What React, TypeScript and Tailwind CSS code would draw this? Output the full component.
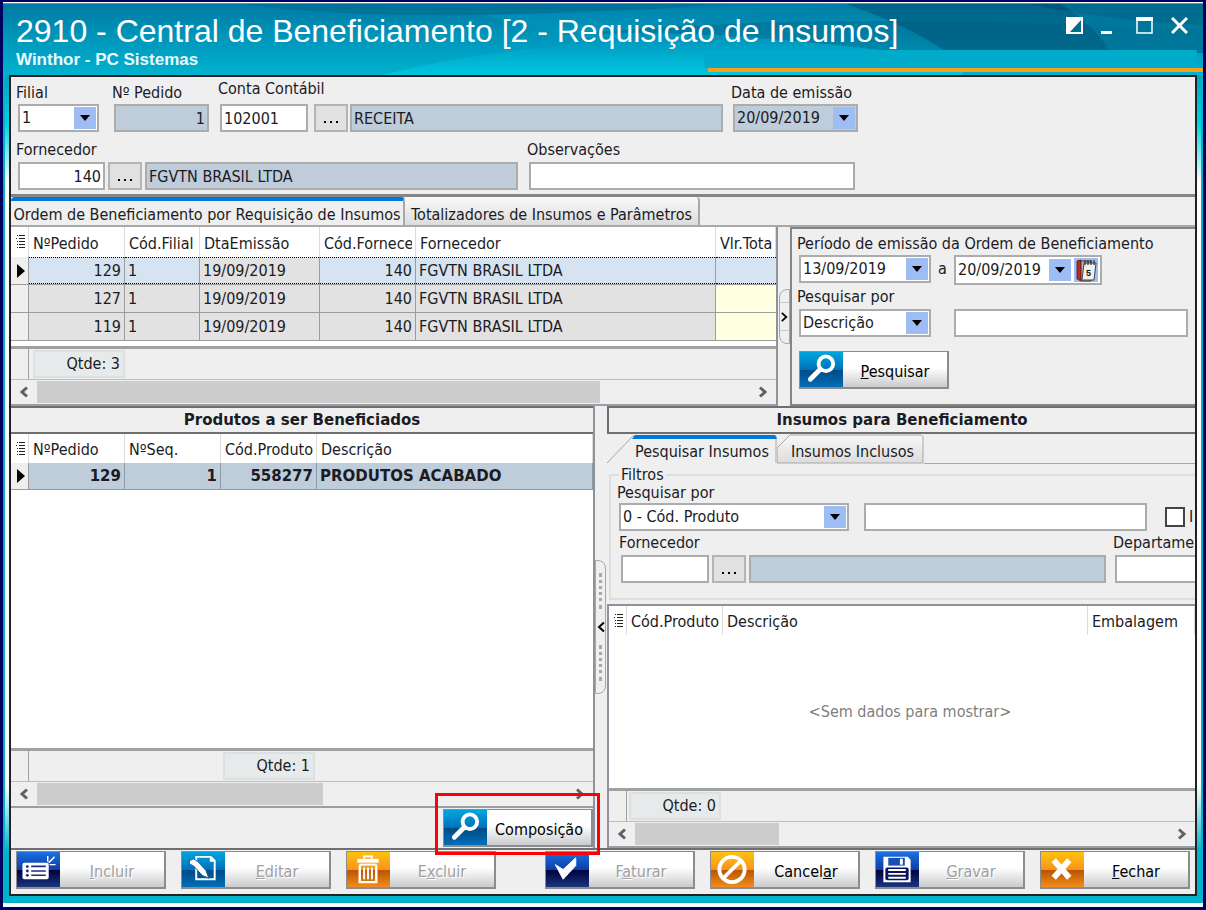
import type { ReactNode } from "react";
import { clsx } from "clsx";

type Tone = "navy" | "sky" | "orange";

const TONES: Record<Tone, string> = {
  navy: "bg-[linear-gradient(#1b6fe0,#0d3fa8_50%,#00003c_51%,#1a3580)]",
  sky: "bg-[linear-gradient(#00a5de,#0072bc_50%,#004a85_51%,#006fb8)]",
  orange: "bg-[linear-gradient(#ffc20e,#f7941d_50%,#b85400_51%,#f28c1c)]",
};

const ORDERS = [
  { id: "129", branch: "1", date: "19/09/2019", code: "140", supplier: "FGVTN BRASIL LTDA" },
  { id: "127", branch: "1", date: "19/09/2019", code: "140", supplier: "FGVTN BRASIL LTDA" },
  { id: "119", branch: "1", date: "19/09/2019", code: "140", supplier: "FGVTN BRASIL LTDA" },
];

const FIELD = "h-7 border-2 border-[#acacac] px-[2px] leading-6 outline-none";
const LABEL = "-ml-[2px] block whitespace-nowrap";
const BOLD = "font-['DejaVu_Sans','Noto_Sans',sans-serif] text-[15px] font-bold";

/* ---------- icons ---------- */

function SearchIcon() {
  return (
    <svg viewBox="0 0 43 36" className="size-full" fill="none" stroke="#fff">
      <circle cx="26" cy="12" r="7.500" strokeWidth="4" />
      <path d="M20 18L10 28" strokeWidth="5" strokeLinecap="round" />
    </svg>
  );
}

function ListIcon() {
  return (
    <svg viewBox="0 0 43 36" className="size-full">
      <rect x="5" y="11" width="27" height="17" rx="2" fill="#fff" />
      <g fill="#1c2f80">
        <circle cx="10" cy="15" r="1.500" />
        <circle cx="10" cy="19.500" r="1.500" />
        <circle cx="10" cy="24" r="1.500" />
        <path d="M14 14h15v1.600H14zM14 18.700h15v1.600H14zM14 23.200h15v1.600H14z" />
      </g>
      <path d="M31 4v6M38 5l-6 6M33 13h6" stroke="#fff" strokeWidth="1.500" />
    </svg>
  );
}

function EditIcon() {
  return (
    <svg viewBox="0 0 43 36" className="size-full" fill="none">
      <path d="M14 5h15l4 4v19H14z" stroke="#fff" strokeWidth="2" />
      <path d="M28 4v6h6z" fill="#fff" />
      <path d="M7 9l4-2 5 3 8 9 3 8-7-3-8-9-5-3z" fill="#fff" stroke="#0b5c9c" strokeWidth="1" />
    </svg>
  );
}

function TrashIcon() {
  return (
    <svg viewBox="0 0 43 36" className="size-full" fill="none" stroke="#fff">
      <path d="M17 7V4.500h8V7" strokeWidth="2" />
      <path d="M10 9h22" strokeWidth="4" />
      <path d="M12 13h18" strokeWidth="2" />
      <path d="M12.500 14v17h17V14" strokeWidth="2.500" />
      <path d="M17 16v12M21 16v12M25 16v12" strokeWidth="2" />
    </svg>
  );
}

function CheckIcon() {
  return (
    <svg viewBox="0 0 43 36" className="size-full">
      <path d="M9 13l8 5L30 6v8L17 28z" fill="#fff" stroke="#fff" />
    </svg>
  );
}

function BanIcon() {
  return (
    <svg viewBox="0 0 43 36" className="size-full" fill="none" stroke="#fff" strokeWidth="4">
      <circle cx="21" cy="18" r="13" />
      <path d="M12 27L30 9" />
    </svg>
  );
}

function SaveIcon() {
  return (
    <svg viewBox="0 0 43 36" className="size-full">
      <path d="M7 5h25l3 3v23H7z" fill="#fff" />
      <rect x="12" y="6" width="17" height="8" fill="#1650b5" />
      <rect x="24" y="7" width="3" height="6" fill="#fff" />
      <rect x="9" y="16" width="24" height="13" rx="2" fill="#0a145e" />
      <path d="M12 18.500h18M12 22.500h18M12 26.500h18" stroke="#fff" strokeWidth="2" />
    </svg>
  );
}

function CrossIcon() {
  return (
    <svg viewBox="0 0 43 36" className="size-full" stroke="#fff" strokeWidth="6">
      <path d="M12.500 8.500l16 18M28.500 8.500l-16 18" />
    </svg>
  );
}

function CalendarIcon() {
  return (
    <svg viewBox="0 0 24 24" className="size-6">
      <path d="M3 3l4-1v21l-4-2z" fill="#c4281b" stroke="#571510" strokeWidth=".8" />
      <path d="M7 3h10v20H7z" fill="#b9b4ae" stroke="#443333" strokeWidth="1" />
      <path d="M10 5h12l-2 17H8z" fill="#f2f0ee" stroke="#444" strokeWidth="1" />
      <path d="M11 2v5M14 2v5M17 2v5M20 2v5" stroke="#333" strokeWidth="1.200" />
      <text x="12" y="18" fontSize="9" fontWeight="700" fill="#111" fontFamily="Liberation Sans">5</text>
    </svg>
  );
}

function Chevron({ right, dark }: { right?: boolean; dark?: boolean }) {
  return (
    <svg viewBox="0 0 10 12" className={clsx("h-3 w-[10px]", right && "rotate-180")} fill="none">
      <path d="M8 1.500L3 6l5 4.500" stroke={dark ? "#000" : "#606060"} strokeWidth={dark ? 2 : 3} />
    </svg>
  );
}

/* ---------- form pieces ---------- */

function DropArrow() {
  return (
    <span className="flex h-[22px] w-[22px] items-center justify-center bg-[#9fbdf5]">
      <svg viewBox="0 0 12 6" className="h-[6px] w-3"><path d="M1 0h10L6 6z" /></svg>
    </span>
  );
}

function Combo({ id, value, className }: { id: string; value: string; className: string }) {
  return (
    <div className={clsx("relative", className)}>
      <select id={id} className={clsx(FIELD, "block w-full appearance-none bg-white")}>
        <option>{value}</option>
      </select>
      <span className="pointer-events-none absolute top-[3px] right-[3px]"><DropArrow /></span>
    </div>
  );
}

function DateField({ id, value, className, label, readOnly, calendar }: {
  id: string; value: string; className: string; label?: string; readOnly?: boolean; calendar?: boolean;
}) {
  return (
    <div className={clsx("flex items-center border-2 border-[#acacac]", calendar ? "h-[30px]" : "h-7", readOnly ? "bg-[#bfccd9]" : "bg-white", className)}>
      <input id={id} aria-label={label} defaultValue={value} readOnly={readOnly} className="h-6 min-w-0 flex-1 bg-transparent pl-[2px] leading-6 outline-none" />
      <button type="button" aria-label="Abrir calendário" className="mr-px"><DropArrow /></button>
      {calendar && (
        <button type="button" aria-label="Escolher período" className="mx-[2px] bg-[#9fbdf5]"><CalendarIcon /></button>
      )}
    </div>
  );
}

function Lookup({ label }: { label: string }) {
  return (
    <button type="button" aria-label={label} className="flex h-7 w-[34px] shrink-0 items-center justify-center border-2 border-[#b4b4b4] bg-[#e1e1e1] pt-2">
      <svg viewBox="0 0 16 4" className="h-1 w-4"><path d="M1 1h2v2H1zM7 1h2v2H7zM13 1h2v2h-2z" /></svg>
    </button>
  );
}

function ActionButton({ icon, tone, disabled, children }: { icon: ReactNode; tone: Tone; disabled?: boolean; children: ReactNode }) {
  return (
    <button
      type="button"
      disabled={disabled}
      className={clsx(
        "flex h-[38px] w-[150px] shrink-0 border border-r-2 border-b-2 border-[#8c8c8c] bg-[linear-gradient(#fff_45%,#c9cbcd)]",
        disabled ? "text-[#a0a0a0] [text-shadow:1px_1px_0_#fff]" : "text-black",
      )}
    >
      <span className={clsx("h-full w-[43px] shrink-0", TONES[tone])}>{icon}</span>
      <span className="flex flex-1 items-center justify-center self-stretch pt-1">
        <span>{children}</span>
      </span>
    </button>
  );
}

function GridMark() {
  return (
    <svg viewBox="0 0 10 14" className="ml-[5px] h-[14px] w-[10px]" fill="#222">
      <path d="M1 0h1v1H1zM3 0h6v1H3zM0 3h1v1H0zM3 3h6v1H3zM1 6h1v1H1zM3 6h6v1H3zM1 9h1v1H1zM3 9h6v1H3zM1 12h1v1H1zM3 12h6v1H3z" />
    </svg>
  );
}

function RowMark() {
  return <svg viewBox="0 0 8 14" className="ml-[6px] h-[14px] w-2"><path d="M0 0l8 7-8 7z" /></svg>;
}

function HeadCell({ children }: { children: ReactNode }) {
  return (
    <th scope="col" className="overflow-hidden border-r border-[#dcdcdc] p-0 pt-[3px] pr-[3px] pl-1 text-left font-normal">
      <div className="overflow-hidden whitespace-nowrap">{children}</div>
    </th>
  );
}

function GridFooter({ count, offset }: { count: number; offset: string }) {
  return (
    <div className="flex h-[34px] shrink-0 items-center border-t-[3px] border-b border-t-[#a0a0a0] border-b-[#bdbdbd]">
      <span className="h-full w-[18px] border-r border-[#a0a0a0]" />
      <span className={clsx("h-7 w-[92px] border-2 border-[#dde0e0] bg-[#e6eaea] pr-[3px] text-right leading-6", offset)}>Qtde: {count}</span>
    </div>
  );
}

function ScrollBar({ thumb }: { thumb: string }) {
  return (
    <div className="flex h-[26px] shrink-0 items-center border-b-2 border-[#9a9ea6]">
      <button type="button" aria-label="Rolar à esquerda" className="flex w-[26px] justify-center"><Chevron /></button>
      <div className="flex-1"><div className={clsx("h-[22px] bg-[#cdcdcd]", thumb)} /></div>
      <button type="button" aria-label="Rolar à direita" className="flex w-[26px] justify-center"><Chevron right /></button>
    </div>
  );
}

/* ---------- page sections ---------- */

function TitleBar() {
  return (
    <header className="relative flex h-[72px] shrink-0 justify-between overflow-hidden bg-[linear-gradient(#007aa3,#0094b9_45%,#00b2cf)] text-white">
      <svg viewBox="0 0 1200 72" preserveAspectRatio="none" className="absolute inset-0 size-full">
        <defs>
          <linearGradient id="sweep" x1="0" x2="1">
            <stop offset="0" stopColor="#00a2c8" />
            <stop offset="1" stopColor="#0085ad" />
          </linearGradient>
          <linearGradient id="glow" x1="0" x2="0" y1="0" y2="1">
            <stop offset="0" stopColor="#0090b8" />
            <stop offset="1" stopColor="#00c6e0" />
          </linearGradient>
        </defs>
        <path d="M240 1Q330 14 480 12T720 0z" fill="#006b92" opacity=".6" />
        <path d="M380 72Q480 46 620 38T960 30V72z" fill="url(#glow)" />
        <path d="M560 32Q700 18 860 18T1200 26V50H900Q700 24 560 32z" fill="#006488" opacity=".45" />
        <path d="M480 12Q700 4 860 0Q700 20 560 32z" fill="url(#sweep)" opacity=".35" />
        <path d="M840 0Q905 22 945 50H1200V0z" fill="#005578" opacity=".6" />
        <path d="M1020 0H1200V22Q1120 20 1020 0z" fill="#004763" opacity=".5" />
        <path d="M1056 0Q1092 22 1108 50H1200V0z" fill="#008fb5" opacity=".4" />
        <path d="M701 47h493v18H701z" fill="#00aacb" />
        <path d="M705 65h495v4H705z" fill="#f7a11a" />
        <path d="M0 0h1200v1H0z" fill="#12b4cb" />
      </svg>
      <div className="relative pl-[13px]">
        <h1 className="pt-[10px] font-['Liberation_Sans'] text-[32px] leading-9">2910 - Central de Beneficiamento [2 - Requisição de Insumos]</h1>
        <p className="font-['Liberation_Sans'] text-[17px] leading-[22px] font-bold text-[#e8fbff]">Winthor - PC Sistemas</p>
      </div>
      <div className="relative flex items-start gap-[18px] pt-[14px] pr-[15px]">
        <button type="button" aria-label="Alternar tema">
          <svg viewBox="0 0 17 17" className="size-[17px]"><path d="M0 0h17v17H0z" fill="#fff" /><path d="M15 3v12H4z" fill="#006b8e" /></svg>
        </button>
        <button type="button" aria-label="Minimizar">
          <svg viewBox="0 0 17 17" className="size-[17px]"><path d="M0 14h11v3H0z" fill="#fff" /></svg>
        </button>
        <button type="button" aria-label="Maximizar">
          <svg viewBox="0 0 17 17" className="size-[17px]"><path d="M1 2h15v14H1z" fill="none" stroke="#fff" strokeWidth="1.500" /><path d="M0 0h17v4H0z" fill="#fff" /></svg>
        </button>
        <button type="button" aria-label="Fechar janela">
          <svg viewBox="0 0 17 17" className="size-[17px]"><path d="M1 1l15 15M16 1L1 16" stroke="#fff" strokeWidth="3" /></svg>
        </button>
      </div>
    </header>
  );
}

function OrderForm() {
  return (
    <form className="shrink-0 border-b-[3px] border-[#858585] pt-px pb-1 pl-[7px]">
      <div className="flex items-end">
        <div className="mr-[15px] w-[81px]">
          <label htmlFor="filial" className={clsx(LABEL, "leading-[22px]")}>Filial</label>
          <Combo id="filial" value="1" className="w-full" />
        </div>
        <div className="mr-[11px] w-[95px]">
          <label htmlFor="pedido" className={clsx(LABEL, "leading-[22px]")}>Nº Pedido</label>
          <input id="pedido" readOnly defaultValue="1" className={clsx(FIELD, "block w-full bg-[#bfccd9] text-right")} />
        </div>
        <div className="mr-[10px]">
          <label htmlFor="conta" className={clsx(LABEL, "pb-1 leading-[22px]")}>Conta Contábil</label>
          <div className="flex">
            <input id="conta" defaultValue="102001" className={clsx(FIELD, "mr-[6px] w-[88px] bg-white")} />
            <Lookup label="Buscar conta contábil" />
            <input aria-label="Nome da conta" readOnly defaultValue="RECEITA" className={clsx(FIELD, "ml-[2px] w-[373px] bg-[#bfccd9]")} />
          </div>
        </div>
        <div>
          <label htmlFor="emissao" className={clsx(LABEL, "leading-[22px]")}>Data de emissão</label>
          <DateField id="emissao" value="20/09/2019" readOnly className="w-[125px]" />
        </div>
      </div>
      <div className="mt-[6px] flex items-end gap-[11px]">
        <div>
          <label htmlFor="fornecedor" className={clsx(LABEL, "leading-6")}>Fornecedor</label>
          <div className="flex gap-[3px]">
            <input id="fornecedor" defaultValue="140" className={clsx(FIELD, "w-[87px] bg-white text-right")} />
            <Lookup label="Buscar fornecedor" />
            <input aria-label="Nome do fornecedor" readOnly defaultValue="FGVTN BRASIL LTDA" className={clsx(FIELD, "w-[373px] bg-[#bfccd9]")} />
          </div>
        </div>
        <div>
          <label htmlFor="obs" className={clsx(LABEL, "leading-6")}>Observações</label>
          <input id="obs" className={clsx(FIELD, "block w-[326px] bg-white")} />
        </div>
      </div>
    </form>
  );
}

function OrdersGrid() {
  return (
    <div className="flex min-w-0 flex-col overflow-hidden border-r-2 border-[#8d929c]">
      <div className="min-h-0 flex-1 bg-white">
        <table className="w-full table-fixed border-separate border-spacing-0">
          <colgroup>
            <col className="w-[18px]" />
            <col className="w-24" />
            <col className="w-[75px]" />
            <col className="w-[120px]" />
            <col className="w-24" />
            <col className="w-[300px]" />
            <col />
          </colgroup>
          <thead>
            <tr className="h-[30px]">
              <th className="border-r border-[#dcdcdc] p-0"><GridMark /></th>
              <HeadCell>NºPedido</HeadCell>
              <HeadCell>Cód.Filial</HeadCell>
              <HeadCell>DtaEmissão</HeadCell>
              <HeadCell>Cód.Fornece</HeadCell>
              <HeadCell>Fornecedor</HeadCell>
              <HeadCell>Vlr.Tota</HeadCell>
            </tr>
          </thead>
          <tbody>
            {ORDERS.map((o, i) => {
              const active = i === 0;
              const cell = clsx("border-r border-b border-[#9c9c9c] p-0", active ? "bg-[#d6e3f0]" : "bg-[#e2e2e2]");
              const box = clsx("h-[27px] px-[3px] whitespace-nowrap", active ? "border-y border-dotted border-black leading-[25px]" : "leading-7");
              return (
                <tr key={o.id}>
                  <td className="border-r border-b border-[#9c9c9c] bg-[#efefef] p-0">{active && <RowMark />}</td>
                  <td className={cell}><div className={clsx(box, "text-right")}>{o.id}</div></td>
                  <td className={cell}><div className={box}>{o.branch}</div></td>
                  <td className="border-r border-b border-[#9c9c9c] bg-[#e2e2e2] p-0"><div className={box}>{o.date}</div></td>
                  <td className={cell}><div className={clsx(box, "text-right")}>{o.code}</div></td>
                  <td className={cell}><div className={box}>{o.supplier}</div></td>
                  <td className={clsx("border-b border-[#9c9c9c] p-0", active ? "bg-[#d6e3f0]" : "bg-[#ffffe1]")}><div className={box} /></td>
                </tr>
              );
            })}
          </tbody>
        </table>
      </div>
      <GridFooter count={3} offset="ml-1" />
      <ScrollBar thumb="w-[79%]" />
    </div>
  );
}

function SearchPanel() {
  return (
    <section className="min-w-0 border-2 border-r-0 border-[#858585] pt-1 pr-[7px] pl-[7px]">
      <label htmlFor="inicio" className={clsx(LABEL, "leading-[22px]")}>Período de emissão da Ordem de Beneficiamento</label>
      <div className="flex items-start">
        <DateField id="inicio" value="13/09/2019" className="w-[132px]" />
        <span className="w-[23px] text-center leading-7">a</span>
        <DateField id="fim" label="Data final" value="20/09/2019" calendar className="w-[148px]" />
      </div>
      <label htmlFor="por" className={clsx(LABEL, "leading-6")}>Pesquisar por</label>
      <div className="flex items-end gap-[23px]">
        <Combo id="por" value="Descrição" className="w-[132px]" />
        <input aria-label="Texto da pesquisa" className={clsx(FIELD, "min-w-0 flex-1 bg-white")} />
      </div>
      <div className="mt-[14px]">
        <ActionButton icon={<SearchIcon />} tone="sky"><u>P</u>esquisar</ActionButton>
      </div>
    </section>
  );
}

function ProductsPane() {
  const cell = "border-r border-b border-[#8d9aa6] bg-[#bfccd9] p-0 px-[3px] leading-[26px] whitespace-nowrap";
  return (
    <section className="flex min-h-0 min-w-0 flex-col border-r-2 border-[#8d929c]">
      <h2 className={clsx(BOLD, "h-7 shrink-0 border-y-2 border-[#6f6f6f] text-center leading-6")}>Produtos a ser Beneficiados</h2>
      <div className="min-h-0 flex-1 bg-white">
        <table className="w-full table-fixed border-separate border-spacing-0">
          <colgroup>
            <col className="w-[18px]" />
            <col className="w-24" />
            <col className="w-24" />
            <col className="w-24" />
            <col />
          </colgroup>
          <thead>
            <tr className="h-[29px]">
              <th className="border-r border-[#dcdcdc] p-0"><GridMark /></th>
              <HeadCell>NºPedido</HeadCell>
              <HeadCell>NºSeq.</HeadCell>
              <HeadCell>Cód.Produto</HeadCell>
              <HeadCell>Descrição</HeadCell>
            </tr>
          </thead>
          <tbody className={BOLD}>
            <tr>
              <td className="border-r border-b border-[#9c9c9c] bg-[#efefef] p-0"><RowMark /></td>
              <td className={clsx(cell, "text-right")}>129</td>
              <td className={clsx(cell, "text-right")}>1</td>
              <td className={clsx(cell, "text-right")}>558277</td>
              <td className={cell}>PRODUTOS ACABADO</td>
            </tr>
          </tbody>
        </table>
      </div>
      <GridFooter count={1} offset="ml-[194px]" />
      <ScrollBar thumb="w-[54%]" />
      <div className="flex h-10 shrink-0 items-center justify-end">
        <div className="relative">
          <ActionButton icon={<SearchIcon />} tone="sky">Composição</ActionButton>
          <span className="pointer-events-none absolute -top-4 -right-[7px] -bottom-2 -left-2 z-10 border-[3px] border-[#fb0007]" />
        </div>
      </div>
    </section>
  );
}

function SupplyTabs() {
  return (
    <div role="tablist" className="flex h-[30px] shrink-0">
      <button type="button" role="tab" aria-selected="true" className="relative h-full w-[170px] pt-[6px] pl-5 text-center">
        <svg viewBox="0 0 170 30" className="absolute inset-0 size-full" fill="none">
          <path d="M0 29L26 2H169V29" stroke="#a8a8a8" />
          <path d="M25 5L28 1H168L170 5z" fill="#0078d7" />
        </svg>
        <span className="relative">Pesquisar Insumos</span>
      </button>
      <button type="button" role="tab" aria-selected="false" className="relative h-full w-[147px] pt-[6px] pl-1 text-center">
        <svg viewBox="0 0 147 30" className="absolute inset-0 size-full">
          <defs>
            <linearGradient id="tabfill" x1="0" x2="0" y1="0" y2="1">
              <stop offset="0" stopColor="#f8f8f8" />
              <stop offset="1" stopColor="#dcdcdc" />
            </linearGradient>
          </defs>
          <path d="M0 29V14L13 1H144l2 2V29z" fill="url(#tabfill)" stroke="#a8a8a8" />
        </svg>
        <span className="relative">Insumos Inclusos</span>
      </button>
      <span className="flex-1 border-b border-[#a8a8a8]" />
    </div>
  );
}

function SuppliesPane() {
  return (
    <section className="flex min-h-0 min-w-0 flex-col overflow-hidden">
      <h2 className={clsx(BOLD, "h-7 shrink-0 border-2 border-r-0 border-[#6f6f6f] text-center leading-6")}>Insumos para Beneficiamento</h2>
      <SupplyTabs />
      <fieldset className="mt-[3px] mb-1 ml-[2px] h-[133px] min-w-0 shrink-0 overflow-hidden border-2 border-r-0 border-[#dedede] pl-2 whitespace-nowrap">
        <legend className="h-4 px-[2px] leading-4">Filtros</legend>
        <label htmlFor="filtro" className={clsx(LABEL, "leading-5")}>Pesquisar por</label>
        <div className="flex items-center">
          <Combo id="filtro" value="0 - Cód. Produto" className="mr-[15px] w-[230px] shrink-0" />
          <input aria-label="Valor do filtro" className={clsx(FIELD, "mr-[18px] w-[283px] shrink-0 bg-white")} />
          <label className="flex shrink-0 items-center gap-1">
            <input type="checkbox" className="size-5 appearance-none border-2 border-[#444] bg-white" />
            I
          </label>
        </div>
        <div className="flex gap-[9px] pl-[2px]">
          <div className="shrink-0">
            <label htmlFor="forn2" className={clsx(LABEL, "leading-6")}>Fornecedor</label>
            <div className="flex gap-[3px]">
              <input id="forn2" className={clsx(FIELD, "w-[88px] bg-white")} />
              <Lookup label="Buscar fornecedor do insumo" />
              <input aria-label="Nome do fornecedor do insumo" readOnly className={clsx(FIELD, "w-[357px] bg-[#bfccd9]")} />
            </div>
          </div>
          <div className="shrink-0">
            <label htmlFor="depto" className={clsx(LABEL, "leading-6")}>Departamen</label>
            <input id="depto" className={clsx(FIELD, "w-[120px] bg-white")} />
          </div>
        </div>
      </fieldset>
      <div className="flex min-h-0 flex-1 flex-col border-t-2 border-l-2 border-[#8d929c]">
        <div className="flex min-h-0 flex-1 flex-col bg-white">
          <table className="w-full table-fixed border-separate border-spacing-0">
            <colgroup>
              <col className="w-[18px]" />
              <col className="w-24" />
              <col />
              <col className="w-[107px]" />
            </colgroup>
            <thead>
              <tr className="h-[29px]">
                <th className="border-r border-[#dcdcdc] p-0"><GridMark /></th>
                <HeadCell>Cód.Produto</HeadCell>
                <HeadCell>Descrição</HeadCell>
                <HeadCell>Embalagem</HeadCell>
              </tr>
            </thead>
          </table>
          <p className="flex flex-1 items-center justify-center pl-4 text-[#808080]">&lt;Sem dados para mostrar&gt;</p>
        </div>
        <GridFooter count={0} offset="ml-[2px]" />
        <ScrollBar thumb="w-[27%]" />
      </div>
    </section>
  );
}

function Toolbar() {
  return (
    <footer className="flex h-[46px] shrink-0 items-start justify-between border-t-2 border-[#6f6f6f] px-[5px] pt-px">
      <div className="flex gap-[15px]">
        <ActionButton icon={<ListIcon />} tone="navy" disabled><u>I</u>ncluir</ActionButton>
        <ActionButton icon={<EditIcon />} tone="sky" disabled><u>E</u>ditar</ActionButton>
        <ActionButton icon={<TrashIcon />} tone="orange" disabled>E<u>x</u>cluir</ActionButton>
      </div>
      <div className="flex gap-[15px]">
        <ActionButton icon={<CheckIcon />} tone="navy" disabled>F<u>a</u>turar</ActionButton>
        <ActionButton icon={<BanIcon />} tone="orange">Cancel<u>a</u>r</ActionButton>
        <ActionButton icon={<SaveIcon />} tone="navy" disabled><u>G</u>ravar</ActionButton>
        <ActionButton icon={<CrossIcon />} tone="orange"><u>F</u>echar</ActionButton>
      </div>
    </footer>
  );
}

export default function App() {
  return (
    <div className="flex min-h-screen flex-col bg-[#00005f] px-[3px] pt-[2px] pb-[3px] font-['DejaVu_Sans_Condensed','Noto_Sans',sans-serif] text-base text-[#1b1b24]">
      <div className="flex flex-1 flex-col bg-white pt-px pb-1">
        <TitleBar />
        <div className="flex flex-1 flex-col border-x-2 border-b-2 border-[#06b0c8] bg-[linear-gradient(#00a5bf,#00d5e4_6%,#fff_13%,#fff_86%,#00b4cc_94%)] px-1 pb-[5px]">
          <main className="flex flex-1 flex-col border-2 border-[#222] bg-[#efefef]">
            <OrderForm />

            <div role="tablist" className="flex h-[30px] shrink-0 border-b-2 border-[#a8a8a8]">
              <button type="button" role="tab" aria-selected="true" className="w-[394px] rounded-t-sm border-t-4 border-r-2 border-t-[#0078d7] border-r-[#a8a8a8] pt-1 text-center leading-5 whitespace-nowrap">
                Ordem de Beneficiamento por Requisição de Insumos
              </button>
              <button type="button" role="tab" aria-selected="false" className="w-[295px] rounded-t-sm border-r-2 border-[#a8a8a8] bg-[linear-gradient(#fafafa,#dcdcdc)] pt-2 text-center leading-5 whitespace-nowrap">
                Totalizadores de Insumos e Parâmetros
              </button>
            </div>

            <div className="grid h-[179px] shrink-0 grid-cols-[minmax(0,1fr)_12px_405px]">
              <OrdersGrid />
              <div className="flex items-center justify-center">
                <button type="button" aria-label="Recolher pesquisa" className="flex h-[55px] w-[11px] flex-col rounded-l-lg border border-[#a8a8a8]">
                  <span className="my-3 flex w-full flex-1 items-center justify-center border-y border-[#c8c8c8]"><Chevron right dark /></span>
                </button>
              </div>
              <SearchPanel />
            </div>

            <div className="grid flex-1 grid-cols-[minmax(0,584fr)_12px_minmax(0,588fr)]">
              <ProductsPane />
              <div className="flex items-center">
                <button type="button" aria-label="Recolher produtos" className="flex h-[134px] w-[11px] flex-col items-center justify-between rounded-r-lg border border-[#a8a8a8] py-3">
                  <span className="h-9 border-l-[3px] border-dotted border-[#a8a8a8]" />
                  <Chevron dark />
                  <span className="h-9 border-l-[3px] border-dotted border-[#a8a8a8]" />
                </button>
              </div>
              <SuppliesPane />
            </div>

            <Toolbar />
          </main>
        </div>
      </div>
    </div>
  );
}
